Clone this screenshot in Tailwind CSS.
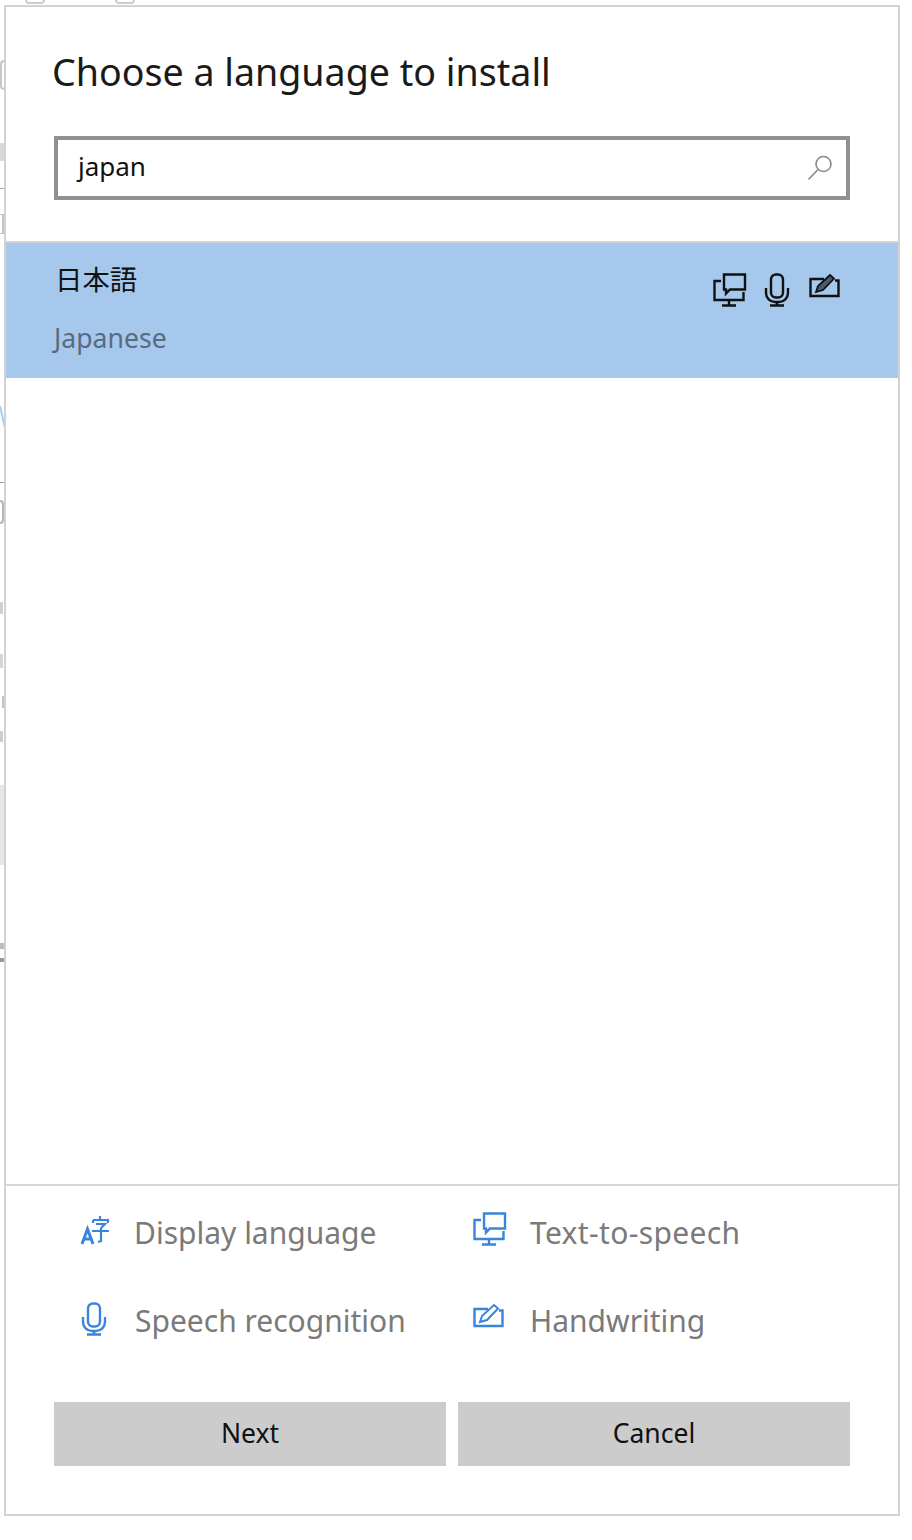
<!DOCTYPE html>
<html lang="en">
<head>
  <meta charset="UTF-8" />
  <title>Choose a language to install</title>
  <script src="https://cdn.jsdelivr.net/npm/@tailwindcss/browser@4"></script>
</head>
<body class="bg-white font-['Noto_Sans','Noto_Sans_CJK_JP',sans-serif] h-[1540px] overflow-hidden relative">

  <!-- background page peeking out left of the dialog -->
  <div class="absolute left-0 top-[60px] w-[4px] h-[30px] rounded-l-full border-l-2 border-y-2 border-[#c8c8c8]"></div>
  <div class="absolute left-0 top-[143px] w-[4px] h-[18px] bg-[#d8d8d8]"></div>
  <div class="absolute left-0 top-[188px] w-[4px] h-px bg-[#aaa]"></div>
  <div class="absolute left-0 top-[214px] w-[4px] h-[20px] border-r-2 border-y border-[#c4c4c4]"></div>
  <svg class="absolute left-0 top-[400px] w-[5px] h-[30px]" viewBox="0 0 5 30" fill="none" stroke="#a9cdec" stroke-width="2"><path d="M0 6 5 28" /></svg>
  <div class="absolute left-0 top-[482px] w-[4px] h-px bg-[#999]"></div>
  <div class="absolute left-0 top-[500px] w-[4px] h-[24px] rounded-r-full border-r-2 border-y-2 border-[#b5b5b5]"></div>
  <div class="absolute left-0 top-[602px] w-[3px] h-[12px] bg-[#cfcfcf]"></div>
  <div class="absolute left-0 top-[654px] w-[3px] h-[14px] bg-[#d6d6d6]"></div>
  <div class="absolute left-[2px] top-[696px] w-[3px] h-[12px] bg-[#c4c4c4]"></div>
  <div class="absolute left-0 top-[731px] w-[3px] h-[11px] bg-[#cdcdcd]"></div>
  <div class="absolute left-0 top-[785px] w-[5px] h-[80px] bg-[#e6e6e6]"></div>
  <div class="absolute left-0 top-[943px] w-[5px] h-[6px] bg-[#bdbdbd]"></div>
  <div class="absolute left-0 top-[958px] w-[5px] h-[4px] bg-[#9a9a9a]"></div>

  <div class="absolute left-[25px] top-0 w-[20px] h-[4px] rounded-b-full border-b-2 border-x-2 border-[#ccc]"></div>
  <div class="absolute left-[115px] top-0 w-[20px] h-[4px] rounded-b-full border-b-2 border-x-2 border-[#ccc]"></div>

  <div class="relative ml-[4px] mt-[5px] w-[896px] h-[1511px] bg-white border-2 border-[#d2d2d2] flex flex-col">
    <h1 class="mt-[37px] ml-[46px] h-[56px] leading-[56px] text-[37.6px] text-[#1a1a1a] font-normal">Choose a language to install</h1>

    <!-- search -->
    <div class="mt-[36px] ml-[48px] w-[796px] h-[64px] border-[4px] border-[#919191] flex items-center justify-between pl-[20px] pr-[12px]">
      <span class="text-[26px] text-[#111] -mt-[4px]">japan</span>
      <svg class="w-[28px] h-[28px]" viewBox="0 0 28 28" fill="none" stroke="#8a8a8a" stroke-width="1.6">
        <circle cx="17.5" cy="10" r="7.5" />
        <path d="M12 15.5 2.5 25.5" />
      </svg>
    </div>

    <!-- result row -->
    <div class="mt-[41px] h-[137px] border-t-2 border-[#cfd4d8] bg-[#a5c8ec] flex justify-between">
      <div class="pl-[48px]">
        <div class="mt-[19px] pl-[1px] h-[36px] leading-[36px] text-[27.4px] text-[#111]">日本語</div>
        <div class="mt-[22px] h-[36px] leading-[36px] text-[26.6px] text-[#5a6b80]">Japanese</div>
      </div>
      <div class="flex items-start gap-[16px] pt-[30px] pr-[57px] text-[#111]">
        <svg class="w-[34px] h-[34px]" viewBox="0 0 34 34" fill="none" stroke="currentColor" stroke-width="2.4">
          <path d="M11 1.5h21v15H17l-4 4v-4h-2z" />
          <path d="M8 8H1.5v19h29v-8M16 27v5M9 32.5h14" />
        </svg>
        <svg class="w-[28px] h-[34px] mr-[2px]" viewBox="0 0 28 34" fill="none" stroke="currentColor" stroke-width="2.4">
          <rect x="8" y="1.5" width="12" height="23" rx="5" />
          <path d="M3 15v5a9 9 0 0 0 9 9h4a9 9 0 0 0 9-9v-5M14 29v3M7 32.5h14" />
        </svg>
        <svg class="w-[32px] h-[26px]" viewBox="0 0 32 26" fill="none" stroke="currentColor" stroke-width="2.4">
          <path d="M15 6H1.5v17h28V7.5H26" />
          <path d="M7 19l2-6L21 2l4 3.5L14 17z" fill="#4a5a6e" stroke-width="1.8" />
        </svg>
      </div>
    </div>

    <div class="flex-1"></div>

    <!-- legend -->
    <div class="h-[218px] border-t-2 border-[#d6d6d6] pt-[3px]">
      <div class="grid grid-cols-[393px_1fr] ml-[74px] text-[#7a7a7a] text-[30px]">
        <div class="flex items-center h-[88px] -mt-[1px]">
          <svg class="w-[30px] h-[32px] mr-[24px] -mt-[4px] text-[#3a85dc]" viewBox="0 0 30 32" fill="none" stroke="currentColor" stroke-width="3">
            <path d="M2 30 7.5 15 13 30M4 25h7" />
            <path d="M20 2v3M13 6v3M13 6h15v3M16 10h9l-4 4M12 17h17M21 14v13l-3 1" stroke-width="2.2" />
          </svg>
          <span>Display language</span>
        </div>
        <div class="flex items-center h-[88px] -mt-[1px]">
          <svg class="w-[34px] h-[34px] mr-[23px] -mt-[6px] text-[#3a85dc]" viewBox="0 0 34 34" fill="none" stroke="currentColor" stroke-width="2.4">
            <path d="M11 1.5h21v15H17l-4 4v-4h-2z" />
            <path d="M8 8H1.5v19h29v-8M16 27v5M9 32.5h14" />
          </svg>
          <span class="tracking-[0.35px]">Text-to-speech</span>
        </div>
        <div class="flex items-center h-[88px]">
          <svg class="w-[28px] h-[34px] mr-[27px] -mt-[2px] text-[#3a85dc]" viewBox="0 0 28 34" fill="none" stroke="currentColor" stroke-width="2.4">
            <rect x="8" y="1.5" width="12" height="23" rx="5" />
            <path d="M3 15v5a9 9 0 0 0 9 9h4a9 9 0 0 0 9-9v-5M14 29v3M7 32.5h14" />
          </svg>
          <span>Speech recognition</span>
        </div>
        <div class="flex items-center h-[88px]">
          <svg class="w-[32px] h-[26px] mr-[25px] -mt-[8px] text-[#3a85dc]" viewBox="0 0 32 26" fill="none" stroke="currentColor" stroke-width="2.4">
            <path d="M15 6H1.5v17h28V7.5H26" />
            <path d="M7 19l2-6L21 2l4 3.5L14 17z" stroke-width="2" />
          </svg>
          <span>Handwriting</span>
        </div>
      </div>
    </div>

    <!-- buttons -->
    <div class="ml-[48px] w-[796px] grid grid-cols-2 gap-[12px] h-[64px] mb-[48px] text-[26.5px] text-[#111]">
      <div class="bg-[#cccccc] flex items-center justify-center">Next</div>
      <div class="bg-[#cccccc] flex items-center justify-center">Cancel</div>
    </div>
  </div>
</body>
</html>
